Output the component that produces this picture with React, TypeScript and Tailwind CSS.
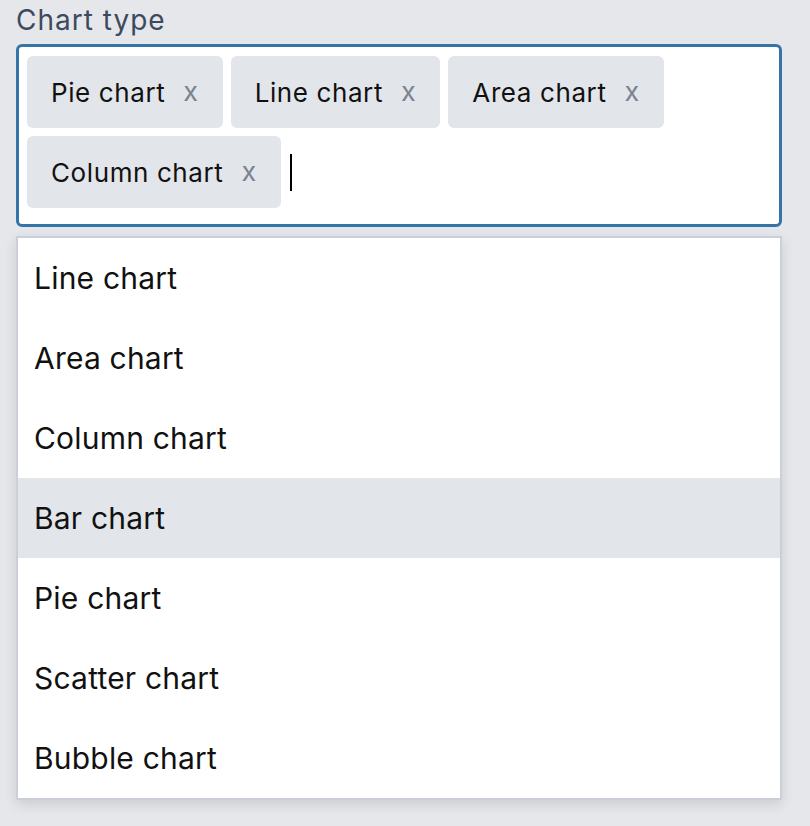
import React from "react";

const selected = ["Pie chart", "Line chart", "Area chart", "Column chart"];
const options = ["Line chart", "Area chart", "Column chart", "Bar chart", "Pie chart", "Scatter chart", "Bubble chart"];

export default function App() {
  return (
    <div
      className="w-[810px] h-[826px] bg-[#e5e7ea] px-4 pt-[2px] overflow-hidden"
      style={{ fontFamily: "Inter, 'Noto Sans', sans-serif" }}
    >
      <div className="text-[28px] leading-[36px] tracking-[1px] text-[#3c4a5d] h-[42px]">Chart type</div>
      <div className="w-[766px] h-[183px] border-[3px] border-[#3574a6] rounded-[6px] bg-white pl-[8px] pr-2 pt-[9px] flex flex-wrap content-start gap-2">
        {selected.map((s) => (
          <div
            key={s}
            className="h-[72px] rounded-[6px] bg-[#e2e5ea] pl-[24px] pr-[24px] flex items-center gap-[18px] text-[26px] tracking-[0.6px] text-[#111]"
          >
            <span>{s}</span>
            <span className="text-[#7b8390] text-[27px]">x</span>
          </div>
        ))}
        <div className="h-[72px] flex items-center pl-[1px]">
          <div className="w-[2px] h-[37px] bg-black" />
        </div>
      </div>
      <div className="mt-[9px] w-[766px] border-2 border-[#cbd0d8] bg-white shadow-[0_4px_12px_rgba(0,0,0,0.12)]">
        {options.map((o) => (
          <div
            key={o}
            className={`h-[80px] flex items-center pl-[16px] text-[30px] tracking-[0.2px] text-[#111] ${o === "Bar chart" ? "bg-[#e2e5ea]" : ""}`}
          >
            {o}
          </div>
        ))}
      </div>
    </div>
  );
}
